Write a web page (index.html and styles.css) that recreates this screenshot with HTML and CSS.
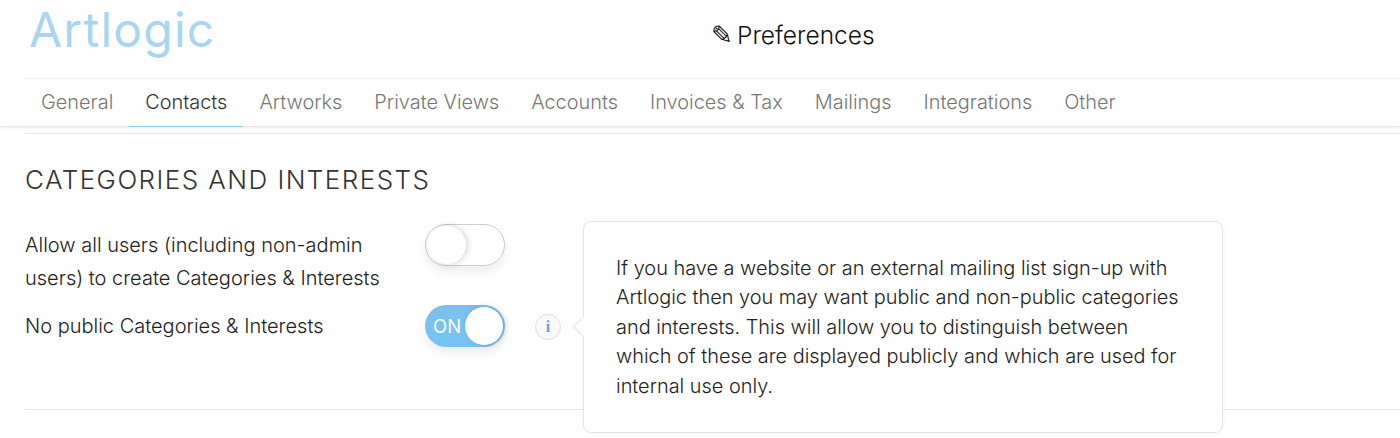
FILE: index.html
```html
<!DOCTYPE html>
<html>
<head>
    <link rel="stylesheet" href="styles.css">
</head>
<body>
    <div class="topbar">
        <div class="header">
            <div class="logo">Artlogic</div>
            <h1 class="title"><span class="pencil">✎</span><span>Preferences</span></h1>
        </div>
        <div class="tabs">
            <a class="tab">General</a>
            <a class="tab active">Contacts</a>
            <a class="tab">Artworks</a>
            <a class="tab">Private Views</a>
            <a class="tab">Accounts</a>
            <a class="tab">Invoices &amp; Tax</a>
            <a class="tab">Mailings</a>
            <a class="tab">Integrations</a>
            <a class="tab">Other</a>
        </div>
    </div>

    <div class="content">
        <h2 class="section-title">CATEGORIES AND INTERESTS</h2>
        <div class="section">
            <div class="settings">
                <div class="row first">
                    <div class="label">Allow all users (including non-admin users) to create Categories &amp; Interests</div>
                    <div class="switch"><span class="knob"></span></div>
                </div>
                <div class="row">
                    <div class="label">No public Categories &amp; Interests</div>
                    <div class="switch on"><span class="on-text">ON</span><span class="knob"></span></div>
                    <div class="info">i</div>
                </div>
            </div>
            <div class="help">
                <span class="arrow"></span>
                If you have a website or an external mailing list sign-up with Artlogic then you may want public and non-public categories and interests. This will allow you to distinguish between which of these are displayed publicly and which are used for internal use only.
            </div>
        </div>
    </div>
</body>
</html>
```

FILE: styles.css
```css
html, body {
    height: 100%;
}
body {
    margin: 0;
    overflow: hidden;
    background: #fff;
    color: #3c3c3c;
    font-family: Inter, "Open Sans", sans-serif;
    font-weight: 300;
}
.topbar {
    height: 126px;
    padding-left: 25px;
    border-bottom: 1px solid #e6e6e6;
    box-shadow: 0 1px 2px #eee;
}
.header {
    display: flex;
    height: 79px;
    border-bottom: 1px solid #eee;
    box-sizing: border-box;
    position: relative;
}
.logo {
    margin-left: 4px;
    font-size: 48px;
    line-height: 59px;
    height: 59px;
    font-weight: 400;
    color: #a8d6f0;
    letter-spacing: 1.25px;
}
.title {
    display: flex;
    margin: 0;
    position: absolute;
    left: 686px;
    top: 19px;
    font-size: 24.5px;
    line-height: 32px;
    font-weight: 300;
    color: #111;
}
.pencil {
    margin-right: 4px;
    font-family: "DejaVu Sans", sans-serif;
    font-size: 26px;
    line-height: 32px;
}
.tabs {
    display: flex;
}
.tab {
    padding: 0 16px;
    font-size: 19.9px;
    line-height: 47px;
    color: #777;
    height: 48px;
    box-sizing: border-box;
}
.tab.active {
    color: #333;
    border-bottom: 1px solid #96cdec;
}
.content {
    margin-left: 25px;
    margin-top: 6px;
    height: 275px;
    border-top: 1px solid #e6e6e6;
    border-bottom: 1px solid #e6e6e6;
}
.section-title {
    margin: 30px 0 0;
    font-size: 26px;
    line-height: 32px;
    font-weight: 300;
    letter-spacing: 1.45px;
    color: #333;
}
.section {
    display: flex;
    margin-top: 25px;
}
.settings {
    width: 558px;
}
.row {
    display: flex;
    align-items: center;
    height: 48px;
}
.row.first {
    align-items: flex-start;
    height: 78px;
    margin-top: 3px;
}
.label {
    width: 400px;
    font-size: 20px;
    line-height: 33px;
    color: #222;
}
.row.first .label {
    width: 370px;
    margin-right: 30px;
    padding-top: 5px;
}
.switch {
    display: flex;
    align-items: center;
    flex: none;
    width: 80px;
    height: 42px;
    padding: 2px;
    box-sizing: border-box;
    border: 1px solid #ccc;
    border-radius: 21px;
    background: #fff;
    box-shadow: 0 6px 10px rgba(0, 0, 0, 0.07);
}
.switch.on {
    border: none;
    background: linear-gradient(#7cc0ea, #74c4f8);
    justify-content: space-between;
    color: #fff;
}
.on-text {
    margin-left: 6px;
    font-size: 18.5px;
    font-weight: 400;
}
.knob {
    width: 38px;
    height: 38px;
    border-radius: 50%;
    background: #fff;
    box-shadow: 2px 0 6px rgba(0, 0, 0, 0.16);
}
.info {
    width: 24px;
    height: 24px;
    margin-left: 30px;
    margin-top: 2px;
    border: 1px solid #ddd;
    border-radius: 50%;
    background: #fafafa;
    color: #6f9fe0;
    font-family: "Liberation Serif", serif;
    font-weight: bold;
    font-size: 16px;
    line-height: 24px;
    text-align: center;
}
.help {
    position: relative;
    width: 640px;
    height: 212px;
    padding: 32px 40px 0 32px;
    box-sizing: border-box;
    border: 1px solid #e4e4e4;
    border-radius: 8px;
    background: #fff;
    box-shadow: 0 0 6px rgba(0, 0, 0, 0.04);
    font-size: 19.9px;
    line-height: 29.4px;
    color: #222;
}
.arrow {
    position: absolute;
    left: -8px;
    top: 97px;
    width: 15px;
    height: 15px;
    box-sizing: border-box;
    background: #fff;
    border-left: 1px solid #e4e4e4;
    border-bottom: 1px solid #e4e4e4;
    transform: rotate(45deg);
}
```
